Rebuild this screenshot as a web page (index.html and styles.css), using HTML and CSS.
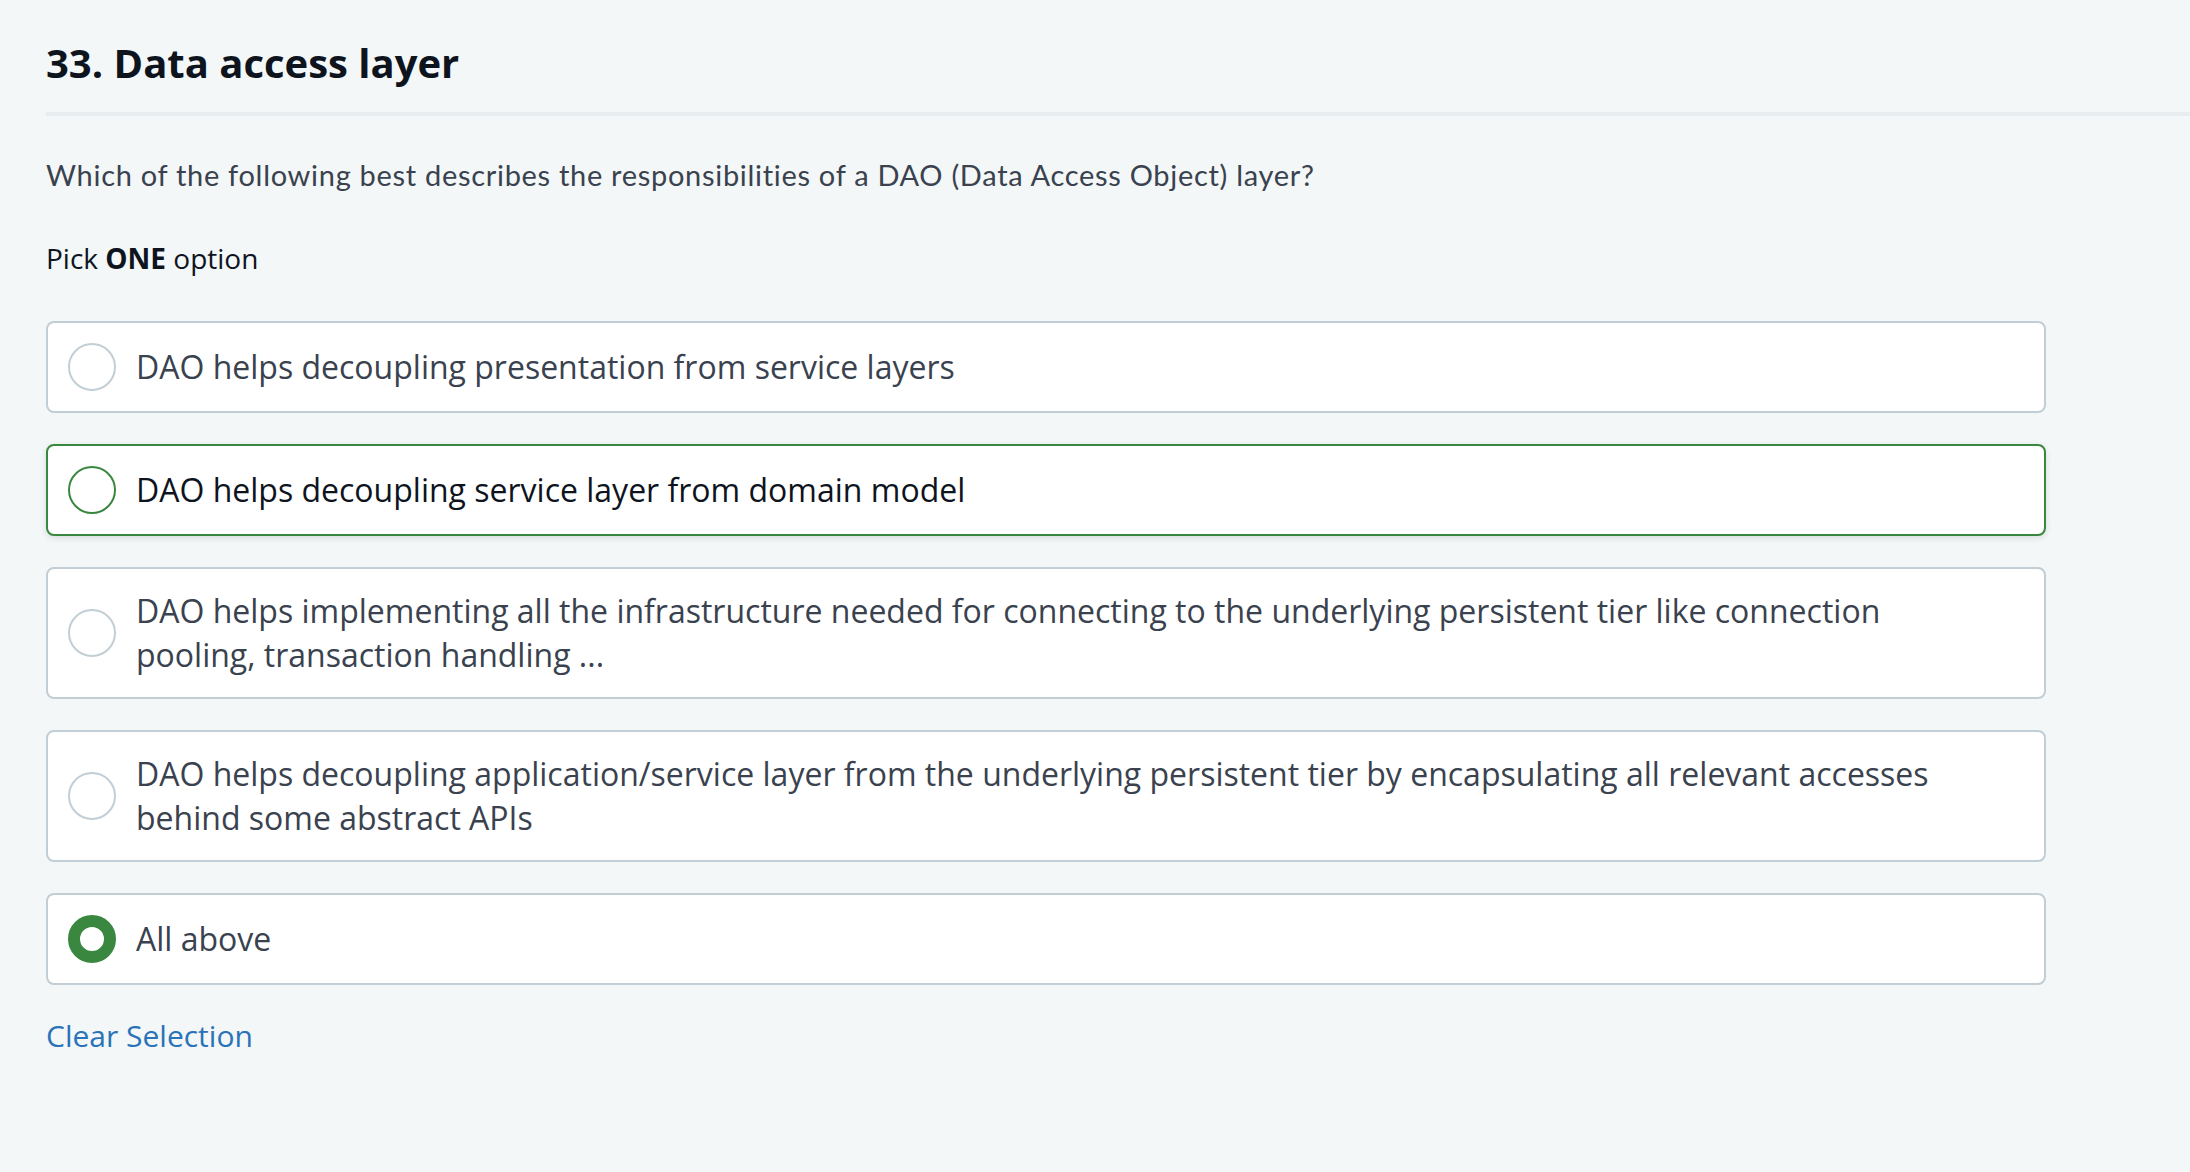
FILE: index.html
```html
<!DOCTYPE html>
<html lang="en">
<head>
<meta charset="utf-8">
<title>33. Data access layer</title>
<link rel="stylesheet" href="styles.css">
</head>
<body>
<main class="page">
  <header class="q-header">
    <h1 class="q-title">33. Data access layer</h1>
  </header>
  <p class="q-desc">Which of the following best describes the responsibilities of a DAO (Data Access Object) layer?</p>
  <p class="q-pick">Pick <strong>ONE</strong> option</p>
  <div class="options">
    <label class="option">
      <span class="radio"></span>
      <span class="opt-text">DAO helps decoupling presentation from service layers</span>
    </label>
    <label class="option option-hover">
      <span class="radio"></span>
      <span class="opt-text">DAO helps decoupling service layer from domain model</span>
    </label>
    <label class="option">
      <span class="radio"></span>
      <span class="opt-text">DAO helps implementing all the infrastructure needed for connecting to the underlying persistent tier like connection pooling, transaction handling ...</span>
    </label>
    <label class="option">
      <span class="radio"></span>
      <span class="opt-text">DAO helps decoupling application/service layer from the underlying persistent tier by encapsulating all relevant accesses behind some abstract APIs</span>
    </label>
    <label class="option">
      <span class="radio radio-checked"></span>
      <span class="opt-text">All above</span>
    </label>
  </div>
  <a class="clear-link" href="#">Clear Selection</a>
</main>
</body>
</html>
```

FILE: styles.css
```css
html, body {
  margin: 0;
  padding: 0;
  background: #f3f7f7;
}

body {
  font-family: "Open Sans", "Liberation Sans", sans-serif;
  color: #39424e;
  height: 1172px;
  overflow: hidden;
}

.page {
  padding: 0 0 0 46px;
}

.q-header {
  padding-top: 35px;
  padding-bottom: 21px;
  border-bottom: 4px solid #e8edf0;
}

.q-title {
  margin: 0;
  font-size: 40px;
  line-height: 56px;
  font-weight: 700;
  color: #0e141e;
}

.q-desc {
  margin: 39px 0 0;
  font-family: Lato, "Noto Sans", sans-serif;
  font-size: 29px;
  line-height: 40px;
  letter-spacing: 0.7px;
  color: #39424e;
}

.q-pick {
  margin: 43px 0 0;
  font-size: 28px;
  line-height: 40px;
  color: #0e141e;
}

.q-pick strong {
  font-weight: 700;
}

.options {
  margin-top: 43px;
  width: 2000px;
  display: flex;
  flex-direction: column;
  gap: 31px;
}

.option {
  display: flex;
  align-items: center;
  gap: 20px;
  padding: 20px 64px 20px 20px;
  background: #ffffff;
  border: 2px solid #c2ced5;
  border-radius: 8px;
  cursor: pointer;
}

.option-hover {
  border-color: #3a873f;
  box-shadow: 0 2px 6px rgba(20, 40, 30, 0.12);
}

.option-hover .opt-text {
  color: #0e141e;
}

.radio {
  flex: 0 0 auto;
  width: 48px;
  height: 48px;
  box-sizing: border-box;
  border: 2px solid #c2ced5;
  border-radius: 50%;
  background: #ffffff;
}

.option-hover .radio {
  border-color: #3a873f;
}

.radio-checked {
  border: 12.5px solid #3a873f;
}

.opt-text {
  font-size: 32px;
  line-height: 44px;
  color: #39424e;
}

.clear-link {
  display: inline-block;
  margin-top: 31px;
  font-size: 30px;
  line-height: 40px;
  color: #2a73b8;
  text-decoration: none;
}
```
